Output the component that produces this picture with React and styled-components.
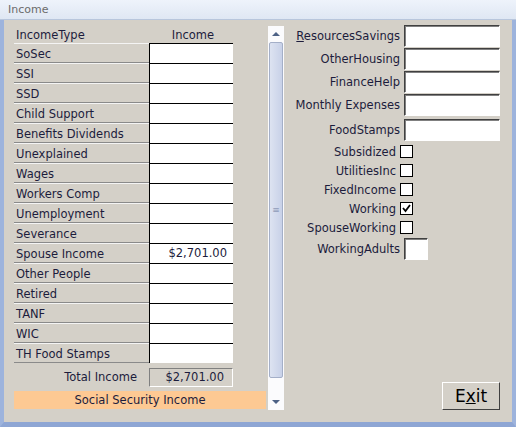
import React from 'react';
import styled, { createGlobalStyle } from 'styled-components';

const Global = createGlobalStyle`
  body { margin: 0; font-family: Tahoma, "DejaVu Sans", sans-serif; }
`;

const Frame = styled.div`
  width: 516px; height: 427px; box-sizing: border-box;
  background: #d4d0c8;
  border-left: 4px solid #9db3dc; border-right: 4px solid #9db3dc;
  border-bottom: 5px solid #8ea6d4;
  display: flex; flex-direction: column;
  font-size: 11.5px; color: #1c1c3c;
`;
const Title = styled.div`
  height: 19px; line-height: 20px; padding-left: 8px; margin: 0 -4px;
  background: linear-gradient(#eef3fb, #dfe7f3);
  border-bottom: 1px solid #b8c6dc;
  color: #6b6b6b; font-size: 11px;
`;
const Body = styled.div`
  flex: 1; display: flex; padding: 7px 0 0 10px; position: relative;
`;
const Left = styled.div`
  width: 254px; display: flex; flex-direction: column;
`;
const Header = styled.div`
  display: flex; height: 16px; line-height: 16px;
  span:first-child { width: 135px; padding-left: 2px; }
  span:last-child { width: 84px; text-align: center; }
`;
const Row = styled.div`
  display: flex; height: 20px;
`;
const Label = styled.div`
  width: 135px; padding-left: 2px; line-height: 20px;
  border-top: 1px solid #f4f4f4; border-bottom: 1px solid #8a8a8a; box-sizing: border-box;
`;
const Cell = styled.div`
  width: 84px; background: #fff; box-sizing: border-box;
  border-left: 1px solid #000; border-top: 1px solid #000;
  text-align: right; padding-right: 6px; line-height: 19px;
`;
const TotalRow = styled.div`
  display: flex; height: 20px; margin-top: 4px; align-items: center;
  span { width: 135px; text-align: right; padding-right: 2px; box-sizing: border-box; padding-right: 12px; }
`;
const TotalBox = styled.div`
  width: 84px; height: 19px; box-sizing: border-box; line-height: 17px;
  border: 1px solid #808080; border-right-color: #fff; border-bottom-color: #fff;
  text-align: right; padding-right: 8px; background: #d4d0c8;
`;
const Banner = styled.div`
  margin-top: 4px; height: 18px; line-height: 18px; width: 252px;
  background: #fdc993; text-align: center;
`;
const Scroll = styled.div`
  width: 16px; height: 384px; margin-top: -1px;
  background: #fbfbfd; display: flex; flex-direction: column; align-items: center;
`;
const Arrow = styled.div`
  width: 0; height: 0; margin: 6px 0;
  border-left: 4px solid transparent; border-right: 4px solid transparent;
  ${p => p.up ? 'border-bottom: 4px solid #4d6185;' : 'border-top: 4px solid #4d6185;'}
`;
const Thumb = styled.div`
  flex: 1; width: 12px; margin-bottom: 16px;
  border: 1px solid #a4afc8; border-radius: 2px;
  background: linear-gradient(90deg, #dde3f1, #c8d1e8);
  display: flex; align-items: center; justify-content: center;
  color: #8f9bb8; font-size: 9px;
`;
const Right = styled.div`
  flex: 1; display: flex; flex-direction: column; align-items: flex-end; padding-right: 12px;
  margin-top: -2px;
`;
const Field = styled.div`
  display: flex; align-items: center; gap: 4px; margin-bottom: ${p => p.gap ?? 1}px;
  height: ${p => p.h || 22}px;
`;
const Input = styled.div`
  width: ${p => p.w || 96}px; height: 22px; box-sizing: border-box; background: #fff;
  border: 1px solid #fff; border-top-color: #404040; border-left-color: #404040;
  box-shadow: inset 1px 1px 0 #808080;
`;
const Check = styled.div`
  width: 11px; height: 11px; border: 1px solid #000; background: #fff; margin-right: 87px;
  display: flex; align-items: center; justify-content: center;
`;
const Exit = styled.button`
  position: absolute; right: 12px; bottom: 12px;
  width: 58px; height: 28px; font-family: inherit; font-size: 17px; color: #000;
  background: #d4d0c8; border: 1px solid; border-color: #fff #404040 #404040 #fff;
  u { text-decoration: underline; }
`;

const incomes = ['SoSec', 'SSI', 'SSD', 'Child Support', 'Benefits Dividends', 'Unexplained', 'Wages',
  'Workers Comp', 'Unemployment', 'Severance', 'Spouse Income', 'Other People', 'Retired', 'TANF', 'WIC', 'TH Food Stamps'];

export default function App() {
  return (
    <Frame>
      <Global />
      <Title>Income</Title>
      <Body>
        <Left>
          <Header><span>IncomeType</span><span>Income</span></Header>
          {incomes.map(n => (
            <Row key={n}>
              <Label>{n}</Label>
              <Cell>{n === 'Spouse Income' ? '$2,701.00' : ''}</Cell>
            </Row>
          ))}
          <TotalRow><span>Total Income</span><TotalBox>$2,701.00</TotalBox></TotalRow>
          <Banner>Social Security Income</Banner>
        </Left>
        <Scroll>
          <Arrow up />
          <Thumb>≡</Thumb>
          <Arrow />
        </Scroll>
        <Right>
          <Field><span><u>R</u>esourcesSavings</span><Input /></Field>
          <Field><span>OtherHousing</span><Input /></Field>
          <Field><span>FinanceHelp</span><Input /></Field>
          <Field gap={3}><span>Monthly Expenses</span><Input /></Field>
          <Field gap={2}><span>FoodStamps</span><Input /></Field>
          {['Subsidized', 'UtilitiesInc', 'FixedIncome', 'Working', 'SpouseWorking'].map(n => (
            <Field key={n} h={17} gap={2}>
              <span>{n}</span>
              <Check>{n === 'Working' && <svg width="9" height="9" viewBox="0 0 9 9"><path d="M1 4l2.5 3L8 1" stroke="#000" strokeWidth="1.8" fill="none" /></svg>}</Check>
            </Field>
          ))}
          <Field><span>WorkingAdults</span><Input w={24} style={{ marginRight: 72 }} /></Field>
        </Right>
        <Exit>E<u>x</u>it</Exit>
      </Body>
    </Frame>
  );
}
